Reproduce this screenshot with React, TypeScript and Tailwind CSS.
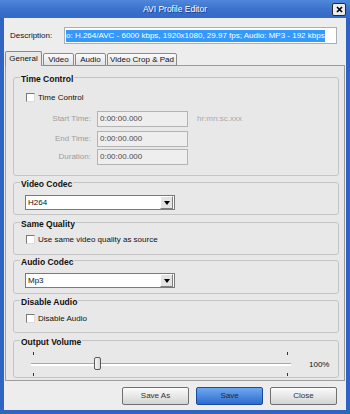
import React from "react";

function Group({ title, className, children }: { title: string; className: string; children?: React.ReactNode }) {
    return (
        <div className={`border border-[#c4c4c4] rounded-[3px] ${className}`}>
            <div className="-mt-[4px] ml-[6px] px-[1px] w-fit bg-[#e8e8e8] font-bold text-[8.5px] leading-[11px]">{title}</div>
            {children}
        </div>
    );
}

function CheckRow({ label, className }: { label: string; className: string }) {
    return (
        <div className={`flex items-center h-[11px] ml-[12px] ${className}`}>
            <span className="w-[9px] h-[9px] border border-[#7a7a7a] border-r-[#dcdcdc] border-b-[#dcdcdc] bg-white" />
            <span className="ml-[3px] leading-[11px]">{label}</span>
        </div>
    );
}

function TimeRow({ label, className }: { label: string; className: string }) {
    return (
        <div className={`flex items-center ${className}`}>
            <span className="w-[77px] text-right text-[#9d9d9d]">{label}</span>
            <div className="ml-[6px] w-[91px] h-[16px] border border-[#b4b4b4] bg-[#eeeeee] flex items-center pl-[2px] text-[#4a4a4a]">
                0:00:00.000
            </div>
            {label === "Start Time:" && <span className="ml-[9px] text-[#a8a8a8]">hr:mn:sc.xxx</span>}
        </div>
    );
}

function Select({ value }: { value: string }) {
    return (
        <div className="mt-[5px] ml-[11px] w-[150px] h-[15px] border border-[#7a7a7a] bg-white flex items-center">
            <span className="flex-1 pl-[2px]">{value}</span>
            <div className="w-[13px] h-[13px] mr-[1px] border border-white border-r-[#7f7f7f] border-b-[#7f7f7f] bg-[#e4e4e4] flex items-center justify-center">
                <svg width="6" height="4" viewBox="0 0 6 4">
                    <path d="M0 0h6L3 4z" fill="#000" />
                </svg>
            </div>
        </div>
    );
}

export default function App() {
    const tabs = [
        { name: "General", w: "w-[37px]" },
        { name: "Video", w: "w-[31px]" },
        { name: "Audio", w: "w-[31px]" },
        { name: "Video Crop & Pad", w: "w-[70px]" },
    ];
    return (
        <div className="w-[350px] h-[414px] bg-[#2f64c2] flex flex-col font-['Liberation_Sans',Arial,sans-serif] text-[8px] text-[#111]">
            {/* title bar */}
            <div className="h-[18px] flex items-center px-[4px] bg-linear-to-b from-[#5088dc] via-[#3b72cd] to-[#3469c5]">
                <div className="w-[14px]" />
                <div className="flex-1 text-center text-white text-[8.5px] [text-shadow:1px_1px_0_#1d428f]">AVI Profile Editor</div>
                <div className="w-[14px] h-[13px] rounded-[2px] border border-[#2a2a2a] bg-[#ececec] flex items-center justify-center">
                    <svg width="7" height="7" viewBox="0 0 7 7">
                        <path d="M1 1l5 5M6 1L1 6" stroke="#000" strokeWidth="1.7" />
                    </svg>
                </div>
            </div>

            <div className="mx-[4px] mb-[4px] flex-1 bg-[#ededed] flex flex-col">
                {/* description */}
                <div className="flex items-center pt-[9px] pl-[6px] pr-[9px]">
                    <span className="w-[54px]">Description:</span>
                    <div className="flex-1 h-[17px] border border-[#a9afb8] bg-white flex items-center pl-[1px] overflow-hidden">
                        <span className="bg-[#3399ff] text-white whitespace-nowrap leading-[12px]">
                            o: H.264/AVC - 6000 kbps, 1920x1080, 29.97 fps; Audio: MP3 - 192 kbps
                        </span>
                    </div>
                </div>

                {/* tabs */}
                <div className="flex items-end mt-[7px] pl-[1px] gap-[1px] relative z-10 -mb-[1px]">
                    {tabs.map((t, i) =>
                        i === 0 ? (
                            <div key={t.name} className={`${t.w} h-[15px] border border-b-0 border-[#8a8a8a] rounded-t-[2px] bg-[#e8e8e8] flex items-center justify-center`}>
                                {t.name}
                            </div>
                        ) : (
                            <div key={t.name} className={`${t.w} h-[13px] border border-[#8a8a8a] rounded-t-[2px] bg-linear-to-b from-[#fbfbfb] to-[#e2e2e2] flex items-center justify-center`}>
                                {t.name}
                            </div>
                        )
                    )}
                </div>

                {/* panel */}
                <div className="mx-[1px] h-[316px] border border-[#9c9c9c] bg-[#e8e8e8] pt-[11px] pl-[7px] pr-[5px] flex flex-col">
                    <Group title="Time Control" className="h-[99px]">
                        <CheckRow label="Time Control" className="mt-[7px]" />
                        <TimeRow label="Start Time:" className="mt-[8px]" />
                        <TimeRow label="End Time:" className="mt-[4px]" />
                        <TimeRow label="Duration:" className="mt-[2px]" />
                    </Group>
                    <Group title="Video Codec" className="h-[33px] mt-[6px]">
                        <Select value="H264" />
                    </Group>
                    <Group title="Same Quality" className="h-[33px] mt-[7px]">
                        <CheckRow label="Use same video quality as source" className="mt-[4px]" />
                    </Group>
                    <Group title="Audio Codec" className="h-[34px] mt-[5px]">
                        <Select value="Mp3" />
                    </Group>
                    <Group title="Disable Audio" className="h-[33px] mt-[6px]">
                        <CheckRow label="Disable Audio" className="mt-[5px]" />
                    </Group>
                    <Group title="Output Volume" className="h-[38px] mt-[7px]">
                        <div className="flex items-start">
                            <div className="relative ml-[17px] w-[260px] h-[28px]">
                                <span className="absolute left-[2px] top-[4px] w-[1px] h-[3px] bg-[#333]" />
                                <span className="absolute left-[256px] top-[4px] w-[1px] h-[3px] bg-[#333]" />
                                <div className="absolute left-0 right-0 top-[15px] h-[3px] border-t border-[#a8a8a8] bg-white" />
                                <div className="absolute left-[63px] top-[9px] w-[7px] h-[13px] rounded-[2px] border border-[#5a5a5a] bg-linear-to-r from-[#f8f8f8] to-[#d8d8d8]" />
                                <span className="absolute left-[2px] top-[25px] w-[1px] h-[3px] bg-[#333]" />
                                <span className="absolute left-[256px] top-[25px] w-[1px] h-[3px] bg-[#333]" />
                            </div>
                            <span className="ml-[18px] mt-[11px] leading-[11px]">100%</span>
                        </div>
                    </Group>
                </div>

                {/* buttons */}
                <div className="flex justify-end gap-[7px] pr-[9px] mt-[6px]">
                    <button className="w-[67px] h-[18px] border border-[#707070] rounded-[2px] bg-linear-to-b from-[#fbfbfb] to-[#d4d4d4] text-[#333]">Save As</button>
                    <button className="w-[67px] h-[18px] border border-[#1c4a9c] rounded-[2px] bg-linear-to-b from-[#6ea9ef] to-[#2d6bd0] text-[#16294a]">Save</button>
                    <button className="w-[67px] h-[18px] border border-[#707070] rounded-[2px] bg-linear-to-b from-[#fbfbfb] to-[#d4d4d4] text-[#333]">Close</button>
                </div>
            </div>
        </div>
    );
}
